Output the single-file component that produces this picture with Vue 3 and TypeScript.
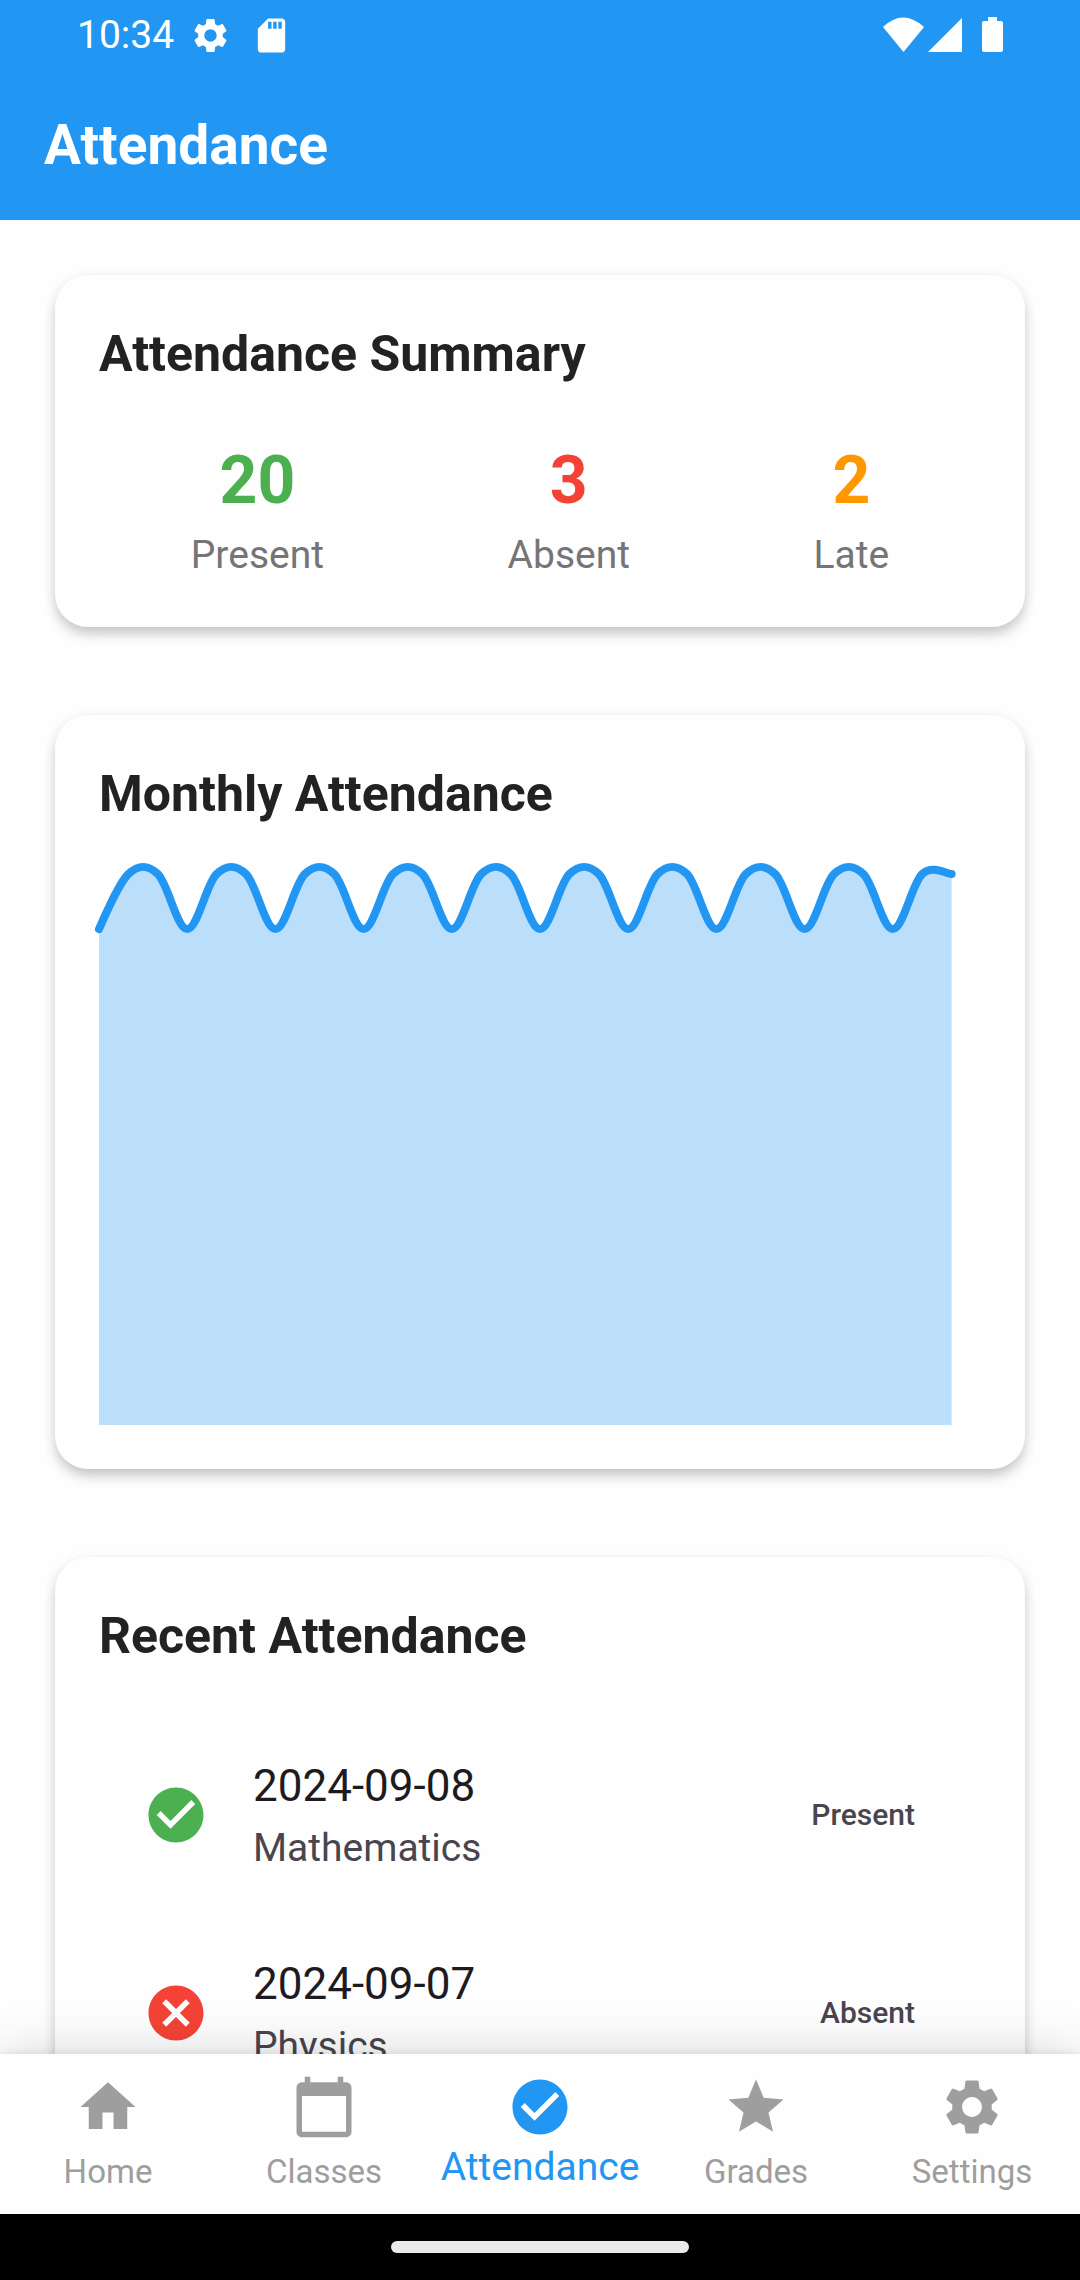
<script setup lang="ts">
interface SummaryItem {
  label: string
  value: number
  tone: 'present' | 'absent' | 'late'
}

interface AttendanceRecord {
  date: string
  subject: string
  status: 'Present' | 'Absent'
}

interface NavItem {
  label: string
  icon: keyof typeof icons
}

const icons = {
  home: 'M10 20v-6h4v6h5v-8h3L12 3 2 12h3v8z',
  calendar:
    'M20 3h-1V1h-2v2H7V1H5v2H4c-1.1 0-2 .9-2 2v16c0 1.1.9 2 2 2h16c1.1 0 2-.9 2-2V5c0-1.1-.9-2-2-2zm0 18H4V8h16v13z',
  check:
    'M12 2C6.48 2 2 6.48 2 12s4.48 10 10 10 10-4.48 10-10S17.52 2 12 2zm-2 15l-5-5 1.41-1.41L10 14.17l7.59-7.59L19 8l-9 9z',
  cancel:
    'M12 2C6.47 2 2 6.47 2 12s4.47 10 10 10 10-4.47 10-10S17.53 2 12 2zm5 13.59L15.59 17 12 13.41 8.41 17 7 15.59 10.59 12 7 8.41 8.41 7 12 10.59 15.59 7 17 8.41 13.41 12 17 15.59z',
  star: 'M12 17.27L18.18 21l-1.64-7.03L22 9.24l-7.19-.61L12 2 9.19 8.63 2 9.24l5.46 4.73L5.82 21z',
  settings:
    'M19.14 12.94c.04-.3.06-.61.06-.94 0-.32-.02-.64-.07-.94l2.03-1.58c.18-.14.23-.41.12-.61l-1.92-3.32c-.12-.22-.37-.29-.59-.22l-2.39.96c-.5-.38-1.03-.7-1.62-.94l-.36-2.54c-.04-.24-.24-.41-.48-.41h-3.84c-.24 0-.43.17-.47.41l-.36 2.54c-.59.24-1.13.57-1.62.94l-2.39-.96c-.22-.08-.47 0-.59.22L2.74 8.87c-.12.21-.08.47.12.61l2.03 1.58c-.05.3-.09.63-.09.94s.02.64.07.94l-2.03 1.58c-.18.14-.23.41-.12.61l1.92 3.32c.12.22.37.29.59.22l2.39-.96c.5.38 1.03.7 1.62.94l.36 2.54c.05.24.24.41.48.41h3.84c.24 0 .44-.17.47-.41l.36-2.54c.59-.24 1.13-.56 1.62-.94l2.39.96c.22.08.47 0 .59-.22l1.92-3.32c.12-.22.07-.47-.12-.61l-2.01-1.58zM12 15.6c-1.98 0-3.6-1.62-3.6-3.6s1.62-3.6 3.6-3.6 3.6 1.62 3.6 3.6-1.62 3.6-3.6 3.6z',
}

const summary: SummaryItem[] = [
  { label: 'Present', value: 20, tone: 'present' },
  { label: 'Absent', value: 3, tone: 'absent' },
  { label: 'Late', value: 2, tone: 'late' },
]

const records: AttendanceRecord[] = [
  { date: '2024-09-08', subject: 'Mathematics', status: 'Present' },
  { date: '2024-09-07', subject: 'Physics', status: 'Absent' },
]

const navItems: NavItem[] = [
  { label: 'Home', icon: 'home' },
  { label: 'Classes', icon: 'calendar' },
  { label: 'Attendance', icon: 'check' },
  { label: 'Grades', icon: 'star' },
  { label: 'Settings', icon: 'settings' },
]
const activeItem = 'Attendance'

// Daily attendance ratio for the month, drawn on a 30-day axis.
const chartWidth = 882
const chartHeight = 550
const smoothness = 0.35
const ratios = Array.from({ length: 30 }, (_, day) => (day % 3 === 0 ? 0.9 : 1))
const points = ratios.map((ratio, day) => ({
  x: (day * chartWidth) / 30,
  y: chartHeight * (1 - ratio),
}))

function buildCurve(): string {
  let handle = { x: 0, y: 0 }
  let path = `M${points[0].x} ${points[0].y}`
  for (let i = 1; i < points.length; i++) {
    const previous = points[i - 1]
    const current = points[i]
    const next = points[Math.min(i + 1, points.length - 1)]
    const first = { x: previous.x + handle.x, y: previous.y + handle.y }
    handle = {
      x: ((next.x - previous.x) / 2) * smoothness,
      y: ((next.y - previous.y) / 2) * smoothness,
    }
    path += ` C${first.x} ${first.y} ${current.x - handle.x} ${current.y - handle.y} ${current.x} ${current.y}`
  }
  return path
}

const linePath = buildCurve()
const areaPath = `${linePath} V${chartHeight} H0 Z`
</script>

<template>
  <div class="screen">
    <header class="top">
      <div class="status-bar">
        <span class="clock">10:34</span>
        <div class="notifications">
          <svg class="status-icon" viewBox="0 0 24 24" aria-hidden="true"><path :d="icons.settings" /></svg>
          <svg class="status-icon" viewBox="0 0 24 24" aria-hidden="true">
            <path d="M18 2h-8L4 8v12c0 1.100.9 2 2 2h12c1.100 0 2-.9 2-2V4c0-1.100-.9-2-2-2zm-6 6h-2V4h2v4zm3 0h-2V4h2v4zm3 0h-2V4h2v4z" />
          </svg>
        </div>
        <div class="signals">
          <svg class="wifi" viewBox="0 0 41 36" aria-hidden="true"><path d="M0 10Q20 -9 41 10L20.500 35z" /></svg>
          <svg class="cell" viewBox="0 0 34 36" aria-hidden="true"><path d="M34 1V35H0z" /></svg>
          <svg class="battery" viewBox="0 0 21 36" aria-hidden="true">
            <path d="M6 0h9v4h4q2 0 2 2v27q0 2-2 2H2q-2 0-2-2V6q0-2 2-2h4z" />
          </svg>
        </div>
      </div>
      <h1 class="app-title">Attendance</h1>
    </header>

    <main class="content">
      <section class="card">
        <h2 class="card-title">Attendance Summary</h2>
        <dl class="summary">
          <div v-for="item in summary" :key="item.label" class="summary-item">
            <dt class="summary-label">{{ item.label }}</dt>
            <dd class="summary-value" :class="item.tone">{{ item.value }}</dd>
          </div>
        </dl>
      </section>

      <section class="card">
        <h2 class="card-title">Monthly Attendance</h2>
        <svg class="chart" :viewBox="`0 0 ${chartWidth} ${chartHeight}`" preserveAspectRatio="none" aria-hidden="true">
          <path class="chart-area" :d="areaPath" />
          <path class="chart-line" :d="linePath" />
        </svg>
      </section>

      <section class="card">
        <h2 class="card-title">Recent Attendance</h2>
        <ul class="records">
          <li v-for="record in records" :key="record.date" class="record">
            <svg class="icon" :class="record.status.toLowerCase()" viewBox="0 0 24 24" aria-hidden="true">
              <path :d="record.status === 'Present' ? icons.check : icons.cancel" />
            </svg>
            <div class="record-text">
              <span class="record-date">{{ record.date }}</span>
              <span class="record-subject">{{ record.subject }}</span>
            </div>
            <span class="record-status">{{ record.status }}</span>
          </li>
        </ul>
      </section>
    </main>

    <nav class="bottom-nav">
      <button
        v-for="item in navItems"
        :key="item.label"
        type="button"
        class="nav-item"
        :class="{ active: item.label === activeItem }"
        :aria-current="item.label === activeItem ? 'page' : undefined"
      >
        <svg class="icon" viewBox="0 0 24 24" aria-hidden="true"><path :d="icons[item.icon]" /></svg>
        <span class="nav-label">{{ item.label }}</span>
      </button>
    </nav>
    <div class="gesture-bar"><span class="gesture-pill"></span></div>
  </div>
</template>

<style>
body {
  margin: 0;
}
</style>

<style scoped>
.screen {
  display: flex;
  flex-direction: column;
  height: 100vh;
  background: #fefefe;
  font-family: Roboto, "Liberation Sans", sans-serif;
}

svg {
  display: block;
  flex: none;
  fill: currentColor;
}

.top {
  flex: none;
  background: #2196f3;
  color: #fff;
}

.status-bar {
  display: flex;
  align-items: center;
  gap: 16px;
  height: 70px;
  padding: 0 77px;
}

.clock {
  font-size: 39px;
  line-height: 44px;
}

.notifications {
  display: flex;
  gap: 20px;
}

.status-icon {
  width: 41px;
  height: 41px;
}

.signals {
  display: flex;
  gap: 4px;
  margin-left: auto;
}

.wifi {
  width: 41px;
  height: 36px;
}

.cell {
  width: 34px;
  height: 36px;
}

.battery {
  width: 21px;
  height: 36px;
  margin-left: 16px;
}

.app-title {
  margin: 0;
  padding: 0 44px;
  font-size: 55px;
  font-weight: 700;
  line-height: 150px;
}

.content {
  display: flex;
  flex: 1;
  flex-direction: column;
  gap: 88px;
  min-height: 0;
  padding: 55px;
  overflow-y: auto;
  scrollbar-width: none;
}

.card {
  flex: none;
  padding: 44px;
  border-radius: 33px;
  background: #fefefe;
  box-shadow: 0 8px 14px -2px rgba(0, 0, 0, 0.2), 0 3px 14px rgba(0, 0, 0, 0.08);
}

.card-title {
  margin: 0 0 44px;
  color: #222;
  font-size: 50px;
  font-weight: 700;
  line-height: 71px;
}

.summary {
  display: flex;
  justify-content: space-around;
  margin: 0;
}

.summary-item {
  display: flex;
  flex-direction: column-reverse;
  align-items: center;
}

.summary-value {
  margin: 0;
  font-size: 66px;
  font-weight: 700;
  line-height: 94px;
}

.summary-label {
  color: #757575;
  font-size: 39px;
  line-height: 55px;
}

.present {
  color: #4caf50;
}

.absent {
  color: #f44336;
}

.late {
  color: #ff9800;
}

.chart {
  width: 100%;
  height: 551px;
  overflow: visible;
}

.chart-area {
  fill: #2196f3;
  fill-opacity: 0.3;
}

.chart-line {
  fill: none;
  stroke: #2196f3;
  stroke-width: 8px;
  stroke-linecap: round;
  vector-effect: non-scaling-stroke;
}

.records {
  margin: 0;
  padding: 0;
  list-style: none;
}

.record {
  display: flex;
  align-items: center;
  gap: 44px;
  height: 198px;
  padding: 0 66px 0 44px;
}

.icon {
  width: 66px;
  height: 66px;
}

.record-text {
  display: flex;
  flex: 1;
  flex-direction: column;
  gap: 4px;
}

.record-date {
  color: #1d1b20;
  font-size: 44px;
  line-height: 62px;
}

.record-subject {
  color: #49454f;
  font-size: 39px;
  line-height: 55px;
}

.record-status {
  color: #49454f;
  font-size: 30px;
  font-weight: 500;
  line-height: 44px;
}

.bottom-nav {
  display: flex;
  position: relative;
  flex: none;
  height: 160px;
  background: #fefefe;
  box-shadow: 0 0 50px rgba(0, 0, 0, 0.16), 0 0 8px rgba(0, 0, 0, 0.1);
}

.nav-item {
  display: flex;
  flex: 1 0 0;
  flex-direction: column;
  align-items: center;
  min-width: 0;
  padding: 20px 0 0;
  border: 0;
  background: none;
  color: #9e9e9e;
  font-family: inherit;
  cursor: pointer;
}

.nav-label {
  margin-top: 8px;
  font-size: 33px;
  line-height: 47px;
}

.active {
  color: #2196f3;
}

.active .nav-label {
  margin-top: 0;
  font-size: 39px;
  line-height: 55px;
}

.gesture-bar {
  display: flex;
  position: relative;
  flex: none;
  align-items: center;
  justify-content: center;
  height: 66px;
  background: #000;
}

.gesture-pill {
  width: 298px;
  height: 12px;
  border-radius: 6px;
  background: #eaeaea;
}
</style>
